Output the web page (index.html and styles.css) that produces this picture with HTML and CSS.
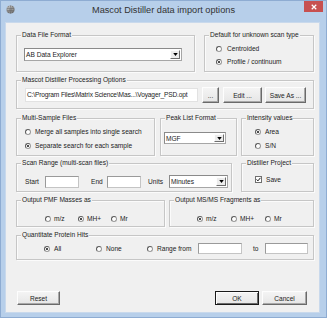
FILE: index.html
```html
<!DOCTYPE html>
<html>
<head>
<meta charset="utf-8">
<link rel="stylesheet" href="styles.css">
</head>
<body>
<div class="window">
  <div class="titlebar">
    <svg class="app-icon" viewBox="0 0 10 10" width="9" height="9">
      <defs>
        <radialGradient id="g" cx="0.4" cy="0.35" r="0.7">
          <stop offset="0" stop-color="#d8d8d8"/>
          <stop offset="1" stop-color="#6c6c6c"/>
        </radialGradient>
      </defs>
      <circle cx="5" cy="5" r="4.5" fill="url(#g)"/>
      <path d="M1 4h8M1 6.3h8M5 0.5v9M2.6 1.3c1.6 2.3 1.6 5.1 0 7.4M7.4 1.3c-1.6 2.3-1.6 5.1 0 7.4" stroke="#555" stroke-width="0.5" fill="none"/>
    </svg>
    <div class="title">Mascot Distiller data import options</div>
    <div class="close">
      <svg viewBox="0 0 8 8" width="6" height="6"><path d="M1 1L7 7M7 1L1 7" stroke="#fff" stroke-width="1.6"/></svg>
    </div>
  </div>

  <div class="client">
    <div class="row r1">
      <div class="group g-format">
        <span class="legend">Data File Format</span>
        <div class="combo combo-format"><span class="combo-text">AB Data Explorer</span><span class="drop"><svg viewBox="0 0 6 4" width="5" height="3"><path d="M0 0h6L3 4z" fill="#000"/></svg></span></div>
      </div>
      <div class="group g-default">
        <span class="legend">Default for unknown scan type</span>
        <div class="opts-col col-default">
          <label class="opt"><span class="radio"></span>Centroided</label>
          <label class="opt"><span class="radio on"></span>Profile / continuum</label>
        </div>
      </div>
    </div>

    <div class="row r2">
      <div class="group g-full">
        <span class="legend">Mascot Distiller Processing Options</span>
        <div class="path-row">
          <div class="field path-field">C:\Program Files\Matrix Science\Mas...\Voyager_PSD.opt</div>
          <div class="btn btn-dots">...</div>
          <div class="btn btn-edit">Edit ...</div>
          <div class="btn btn-save">Save As ...</div>
        </div>
      </div>
    </div>

    <div class="row r3">
      <div class="group g-multi">
        <span class="legend">Multi-Sample Files</span>
        <div class="opts-col col-multi">
          <label class="opt"><span class="radio"></span>Merge all samples into single search</label>
          <label class="opt"><span class="radio on"></span>Separate search for each sample</label>
        </div>
      </div>
      <div class="group g-peak">
        <span class="legend">Peak List Format</span>
        <div class="combo combo-peak"><span class="combo-text">MGF</span><span class="drop"><svg viewBox="0 0 6 4" width="5" height="3"><path d="M0 0h6L3 4z" fill="#000"/></svg></span></div>
      </div>
      <div class="group g-int">
        <span class="legend">Intensity values</span>
        <div class="opts-col col-int">
          <label class="opt"><span class="radio on"></span>Area</label>
          <label class="opt"><span class="radio"></span>S/N</label>
        </div>
      </div>
    </div>

    <div class="row r4">
      <div class="group g-scan">
        <span class="legend">Scan Range (multi-scan files)</span>
        <div class="scan-row">
          <span class="lbl lbl-start">Start</span>
          <div class="field small-field"></div>
          <span class="lbl lbl-end">End</span>
          <div class="field small-field"></div>
          <span class="lbl lbl-units">Units</span>
          <div class="combo combo-units"><span class="combo-text">Minutes</span><span class="drop"><svg viewBox="0 0 6 4" width="5" height="3"><path d="M0 0h6L3 4z" fill="#000"/></svg></span></div>
        </div>
      </div>
      <div class="group g-proj">
        <span class="legend">Distiller Project</span>
        <label class="opt check-opt"><span class="check"><svg viewBox="0 0 7 7" width="5" height="5"><path d="M0.8 3.4L2.7 5.4L6.2 1.2" stroke="#000" stroke-width="1.3" fill="none"/></svg></span>Save</label>
      </div>
    </div>

    <div class="row r5">
      <div class="group g-pmf">
        <span class="legend">Output PMF Masses as</span>
        <div class="opts-row row-pmf">
          <label class="opt w33"><span class="radio"></span>m/z</label>
          <label class="opt w33"><span class="radio on"></span>MH+</label>
          <label class="opt"><span class="radio"></span>Mr</label>
        </div>
      </div>
      <div class="group g-msms">
        <span class="legend">Output MS/MS Fragments as</span>
        <div class="opts-row row-msms">
          <label class="opt w34"><span class="radio on"></span>m/z</label>
          <label class="opt w34"><span class="radio"></span>MH+</label>
          <label class="opt"><span class="radio"></span>Mr</label>
        </div>
      </div>
    </div>

    <div class="row r6">
      <div class="group g-full">
        <span class="legend">Quantitate Protein Hits</span>
        <div class="opts-row row-quant">
          <label class="opt w52"><span class="radio on"></span>All</label>
          <label class="opt w51"><span class="radio"></span>None</label>
          <label class="opt w51"><span class="radio"></span>Range from</label>
          <div class="field range-field"></div>
          <span class="lbl lbl-to">to</span>
          <div class="field range-field2"></div>
        </div>
      </div>
    </div>

    <div class="buttons">
      <div class="btn btn-reset">Reset</div>
      <div class="btn-right">
        <div class="btn btn-ok">OK</div>
        <div class="btn btn-cancel">Cancel</div>
      </div>
    </div>
  </div>
</div>
</body>
</html>
```

FILE: styles.css
```css
* { box-sizing: border-box; }
html, body { margin: 0; padding: 0; }
body {
  width: 327px;
  height: 318px;
  overflow: hidden;
  font-family: "Liberation Sans", Arial, sans-serif;
  font-size: 6.6px;
  color: #1c1c1c;
}

.window {
  width: 327px;
  height: 318px;
  background: #b7cfea;
  border: 1px solid #8eacd2;
  display: flex;
  flex-direction: column;
}

.titlebar {
  height: 21px;
  display: grid;
  grid-template-columns: 1fr auto 1fr;
  align-items: start;
}
.app-icon { margin: 4px 0 0 5px; }
.title {
  font-size: 9.2px;
  line-height: 11px;
  padding-top: 4px;
  color: #333;
}
.close {
  justify-self: end;
  width: 19px;
  height: 11px;
  margin-right: 3px;
  background: #c75050;
  display: flex;
  align-items: center;
  justify-content: center;
}
.close svg { display: block; }

.client {
  flex: 1;
  margin: 0 6px 4px 4px;
  background: #f0f0f0;
  border: 1px solid #c9d9ec;
  padding: 12px 5px 0 10px;
}

.row { display: flex; }
.r1 { height: 37px; gap: 9px; }
.r2 { height: 29px; margin-top: 8px; }
.r3 { height: 38px; margin-top: 9px; gap: 5px; }
.r3 .g-peak { margin-right: -1px; }
.r4 { height: 29px; margin-top: 7px; gap: 9px; }
.r5 { height: 27px; margin-top: 8px; gap: 4px; }
.r6 { height: 25px; margin-top: 8px; }

.group {
  border: 1px solid #c6c6c6;
  box-shadow: 1px 1px 0 #fbfbfb, inset 1px 1px 0 #fbfbfb;
  height: 100%;
}
.legend {
  display: block;
  width: max-content;
  margin: -5px 0 0 4px;
  padding: 0 1px;
  background: #f0f0f0;
  line-height: 8px;
  height: 8px;
}

.g-format { width: 179px; }
.g-default { width: 110px; }
.g-full { width: 298px; }
.g-multi { width: 139px; }
.g-peak { width: 77px; }
.g-int { width: 73px; }
.g-scan { width: 216px; }
.g-proj { width: 73px; }
.g-pmf { width: 149px; }
.g-msms { width: 145px; }

/* combo boxes */
.combo {
  display: flex;
  align-items: stretch;
  background: #fff;
  border: 1px solid #a6a6a6;
  border-top-color: #8a8a8a;
  border-left-color: #8a8a8a;
}
.combo-text {
  flex: 1;
  padding-left: 1px;
  display: flex;
  align-items: center;
  white-space: nowrap;
  overflow: hidden;
}
.drop {
  width: 10px;
  margin: 1px;
  background: #ececec;
  border: 1px solid;
  border-color: #fdfdfd #6e6e6e #6e6e6e #fdfdfd;
  display: flex;
  align-items: center;
  justify-content: center;
}
.drop svg { display: block; }
.combo-format { width: 158px; height: 13px; margin: 9px 0 0 7px; }
.combo-peak { width: 62px; height: 12px; margin: 10px 0 0 3px; }
.combo-units { width: 59px; height: 13px; }

/* radios & checks */
.opt {
  display: flex;
  align-items: center;
  height: 9px;
  line-height: 9px;
  white-space: nowrap;
}
.radio {
  width: 6px;
  height: 6px;
  border-radius: 50%;
  border: 1px solid #9a9a9a;
  border-top-color: #5a5a5a;
  border-left-color: #5a5a5a;
  background: #fff;
  margin-right: 4px;
  flex: none;
  display: flex;
  align-items: center;
  justify-content: center;
}
.radio.on::after {
  content: "";
  width: 2px;
  height: 2px;
  border-radius: 50%;
  background: #111;
}
.opts-col { display: flex; flex-direction: column; }
.col-default { margin: 5px 0 0 11px; gap: 4px; }
.col-default .radio { margin-right: 5px; }
.col-multi { margin: 5px 0 0 8px; gap: 5px; }
.col-int { margin: 5px 0 0 13px; gap: 5px; }

.check-opt { margin: 8px 0 0 13px; }
.check {
  width: 7px;
  height: 7px;
  border: 1px solid #6f6f6f;
  background: #fff;
  margin-right: 4px;
  display: flex;
  align-items: center;
  justify-content: center;
}
.check svg { display: block; }

.opts-row { display: flex; align-items: center; }
.row-pmf { margin: 10px 0 0 28px; }
.row-msms { margin: 10px 0 0 27px; }
.row-quant { margin: 4px 0 0 27px; }
.w33 { width: 33px; }
.w34 { width: 34px; }
.w51 { width: 51px; }
.w52 { width: 52px; }
.row-pmf .radio, .row-msms .radio { margin-right: 3px; }

/* text fields */
.field {
  background: #fff;
  border: 1px solid #c4c4c4;
  border-top-color: #9a9a9a;
  border-left-color: #9a9a9a;
}
.path-row { display: flex; align-items: center; margin: 3px 0 0 8px; }
.path-field {
  width: 173px;
  height: 14px;
  line-height: 12px;
  padding-left: 1px;
  white-space: nowrap;
  overflow: hidden;
  letter-spacing: -0.15px;
  border-color: #e2e2e2;
}
.scan-row { display: flex; align-items: center; margin: 8px 0 0 8px; }
.lbl { white-space: nowrap; }
.lbl-start { width: 20px; }
.small-field { width: 34px; height: 12px; }
.lbl-end { width: 28px; padding-left: 12px; }
.lbl-units { width: 28px; padding-left: 7px; }
.range-field { width: 44px; height: 11px; }
.lbl-to { width: 23px; padding-left: 11px; }
.range-field2 { width: 43px; height: 11px; }

/* buttons */
.btn {
  display: flex;
  align-items: center;
  justify-content: center;
  background: linear-gradient(#f4f4f4, #e6e6e6);
  border: 1px solid;
  border-color: #fdfdfd #6a6a6a #6a6a6a #fdfdfd;
  box-shadow: inset -1px -1px 0 #a8a8a8;
  white-space: nowrap;
}
.btn-dots { width: 17px; height: 16px; margin-left: 4px; }
.btn-edit { width: 39px; height: 16px; margin-left: 4px; }
.btn-save { width: 41px; height: 16px; margin-left: 3px; }

.buttons {
  display: flex;
  justify-content: space-between;
  margin-top: 31px;
  height: 14px;
}
.btn-right { display: flex; gap: 3px; margin-right: 7px; }
.btn-reset { width: 43px; margin-left: 1px; }
.btn-ok {
  width: 44px;
  border: 1px solid #1a1a1a;
  box-shadow: inset 1px 1px 0 #fdfdfd, inset -1px -1px 0 #6a6a6a;
}
.btn-cancel { width: 45px; }
```
